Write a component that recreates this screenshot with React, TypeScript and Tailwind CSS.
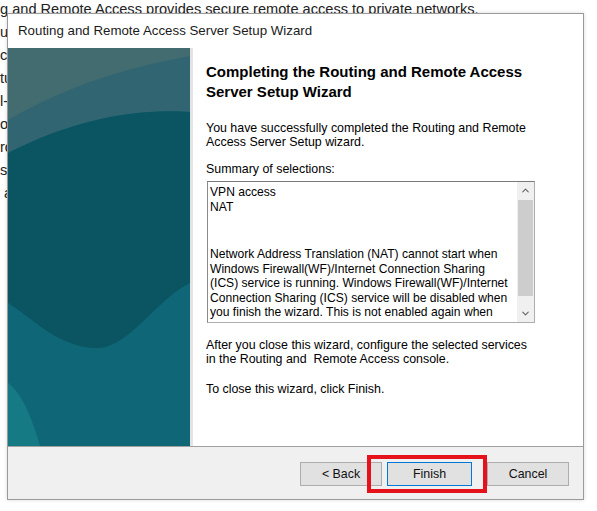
import { ChevronUp, ChevronDown } from "lucide-react";

const summaryLines = [
  "Network Address Translation (NAT) cannot start when",
  "Windows Firewall(WF)/Internet Connection Sharing",
  "(ICS) service is running. Windows Firewall(WF)/Internet",
  "Connection Sharing (ICS) service will be disabled when",
  "you finish the wizard. This is not enabled again when",
];

const backgroundLines = ["u", "cu", "tu", "l-", "o", "ro", "si", "\u00a0a"];

function TealPanel() {
  // bitmap-ish wizard banner, drawn as flat bands
  return (
    <svg width="182" height="398" viewBox="0 0 182 398" className="block">
      <rect width="182" height="398" fill="#0e6676" />
      <path d="M0 0 H182 V64 C120 60 60 75 0 105 Z" fill="#316572" />
      <path d="M0 0 H182 V8 C130 18 70 32 0 72 Z" fill="#426c70" />
      <path
        d="M0 105 C60 75 120 60 182 64 V235 C150 250 120 300 90 300 C50 300 25 270 0 255 Z"
        fill="#0b5461"
      />
      <path d="M0 335 C14 345 24 370 32 398 H0 Z" fill="#157a84" />
    </svg>
  );
}

export default function App() {
  return (
    <div className="relative w-[597px] h-[511px] overflow-hidden bg-white font-['Liberation_Sans',Arial,sans-serif] text-black">
      {/* page behind the wizard */}
      <div className="-mt-[2px] text-[14.6px] leading-[23px] text-[#222]">
        <div className="whitespace-nowrap">
          g and Remote Access provides secure remote access to private networks.
        </div>
        {backgroundLines.map((l, i) => (
          <div key={i} className="whitespace-nowrap">
            {l}
          </div>
        ))}
      </div>

      {/* wizard window */}
      <div className="absolute left-[7px] top-[13px] w-[577px] h-[487px] border border-[#9a9a9a] bg-white flex flex-col shadow-[0_0_4px_rgba(0,0,0,0.15)]">
        <div className="h-[34px] flex items-center pl-[10px] text-[13.3px] text-[#1b1b1b] shrink-0">
          Routing and Remote Access Server Setup Wizard
        </div>

        <div className="flex h-[398px] shrink-0">
          <div className="w-[185px] shrink-0 border-r-[3px] border-[#e4e4e4]">
            <TealPanel />
          </div>
          <div className="pl-[13px] pt-[14px] text-[12.4px] leading-[14px]">
            <div className="font-bold text-[15px] leading-[20px] whitespace-nowrap">
              <div>Completing the Routing and Remote Access</div>
              <div>Server Setup Wizard</div>
            </div>
            <div className="mt-[19px] whitespace-nowrap">
              <div>You have successfully completed the Routing and Remote</div>
              <div>Access Server Setup wizard.</div>
            </div>
            <div className="mt-[13px]">Summary of selections:</div>
            <div className="mt-[5px] ml-[1px] w-[328px] h-[142px] flex border border-[#adadad] border-t-[#7a7a7a] border-l-[#8a8a8a]">
              <div className="flex-1 overflow-hidden pl-[2px] pt-[3px] text-[12.1px]">
                <div className="leading-[15px]">VPN access</div>
                <div className="leading-[15px]">NAT</div>
                <div className="h-[32px]" />
                {summaryLines.map((l, i) => (
                  <div key={i} className="whitespace-nowrap leading-[14.5px]">
                    {l}
                  </div>
                ))}
              </div>
              <div className="w-[17px] bg-[#f0f0f0] flex flex-col items-center shrink-0">
                <div className="h-[17px] flex items-center justify-center">
                  <ChevronUp size={11} strokeWidth={2.2} className="text-[#606060]" />
                </div>
                <div className="flex-1 w-full px-px py-[1px]">
                  <div className="h-[92%] bg-[#cdcdcd]" />
                </div>
                <div className="h-[17px] flex items-center justify-center">
                  <ChevronDown size={11} strokeWidth={2.2} className="text-[#606060]" />
                </div>
              </div>
            </div>
            <div className="mt-[15px] whitespace-nowrap">
              <div>After you close this wizard, configure the selected services</div>
              <div>in the Routing and&nbsp; Remote Access console.</div>
            </div>
            <div className="mt-[16px]">To close this wizard, click Finish.</div>
          </div>
        </div>

        <div className="flex-1 bg-[#f0f0f0] border-t border-[#a0a0a0] flex items-start pt-[15px] pr-[14px] justify-end text-[12.4px]">
          <button className="w-[82px] h-[24px] bg-[#e1e1e1] border border-[#adadad] text-[#111]">
            &lt; Back
          </button>
          <button className="ml-[5px] w-[85px] h-[24px] bg-[#e1e1e1] border border-[#0078d7] text-[#111]">
            Finish
          </button>
          <button className="ml-[15px] w-[82px] h-[24px] bg-[#e1e1e1] border border-[#adadad] text-[#111]">
            Cancel
          </button>
        </div>
      </div>

      {/* red highlight around Finish */}
      <div className="absolute left-[367px] top-[455px] w-[120px] h-[38px] border-4 border-[#e5121b]" />
    </div>
  );
}
